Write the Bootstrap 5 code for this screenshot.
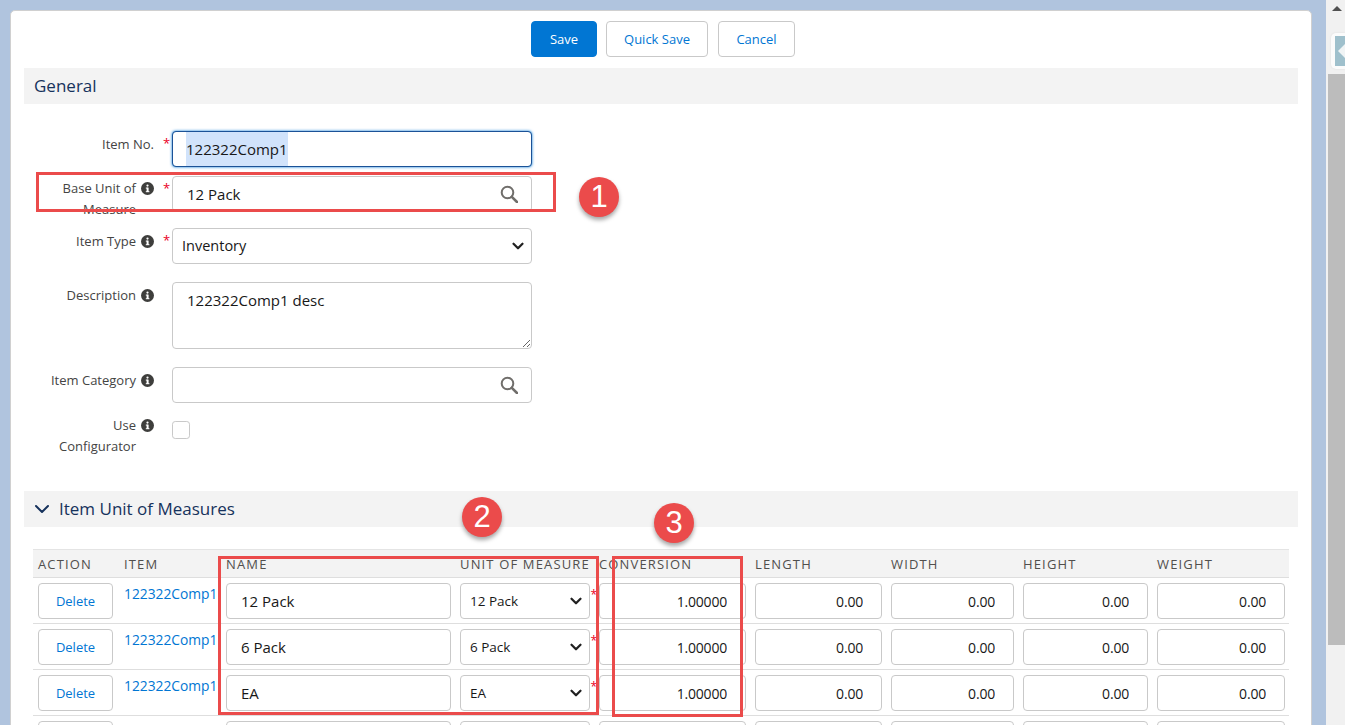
<!DOCTYPE html>
<html lang="en">
<head>
    <meta charset="UTF-8">
    <meta name="viewport" content="width=device-width, initial-scale=1.0">
    <title>Item</title>
    <link href="https://cdn.jsdelivr.net/npm/bootstrap@5.3.0/dist/css/bootstrap.min.css" rel="stylesheet">
    <style>
        html, body { height: 100%; overflow: hidden; }
        body { font-family: "Open Sans", "Liberation Sans", sans-serif; font-size: 13px; color: #181818; background: #b0c4de; }
        .page-wrap { height: 725px; overflow: hidden; position: relative; }
        .main-pane { width: 1326px; height: 725px; overflow: hidden; padding: 10px 14px 0 10px; }
        .fake-scroll { width: 19px; height: 725px; background: #f1f1f1; position: relative; }
        .scroll-up { width: 0; height: 0; border-left: 5px solid transparent; border-right: 5px solid transparent; border-bottom: 5px solid #505050; margin: 6px 0 0 6px; }
        .scroll-thumb { height: 571px; background: #bcbcbc; margin: 63px 0 0 2px; }
        .side-tab { position: absolute; left: 5px; top: 33px; width: 14px; height: 36px; background: #fbfbfb; border-radius: 5px 0 0 5px; padding: 3px 0 3px 4px; box-shadow: 0 0 2px #dcdcdc; }
        .side-tab-in { height: 100%; background: #9fc0cc; display: flex; align-items: center; }
        .side-tab-arrow { width: 0; height: 0; border-top: 8px solid transparent; border-bottom: 8px solid transparent; border-right: 8px solid #f0f4f5; margin-left: 3px; }
        .panel { background: #fff; border: 1px solid #d0d0d0; border-radius: 5px; height: 760px; padding: 10px 13px 0; }
        .btn-row { margin-bottom: 11px; padding-left: 4px; }
        .act-btn { height: 36px; font-size: 13px; padding: 1px 0 0; border-radius: 4px; }
        .act-save { width: 66px; background: #0176d3; border-color: #0176d3; color: #fff; }
        .act-plain { background: #fff; border-color: #c9c9c9; color: #0176d3; }
        .act-quick { width: 102px; margin-left: 9px; }
        .act-cancel { width: 77px; margin-left: 10px; }
        .sec-head { height: 36px; background: #f3f3f3; padding-left: 10px; font-size: 17px; color: #16325c; }
        .fld-wrap { margin-top: 27px; }
        .fld-label { width: 130px; padding-top: 3px; color: #444; line-height: 21px; }
        .fld-label svg { margin-top: 4px; margin-left: 5px; flex-shrink: 0; }
        .fld-star { width: 18px; padding: 3px 0 0 9px; color: #ea001e; font-size: 13px; }
        .fld-box { width: 360px; }
        .h-45 { height: 45px; } .h-52 { height: 52px; } .h-54 { height: 54px; } .h-85 { height: 85px; }
        .label-up { padding-top: 2px; }
        .inp { height: 36px; font-size: 15px; color: #181818; border: 1px solid #c9c9c9; border-radius: 4px; padding: 0 14px; box-shadow: none; }
        .inp-focus { display: flex; align-items: center; padding: 0 13px; border-color: #1b5297; box-shadow: 0 0 3px #0176d3; }
        .inp-focus span { background: #d1e3fb; height: 34px; line-height: 34px; }
        .inp-sel { padding: 0 9px; font-size: 14.5px; background-position: right 6px center; background-size: 14px 12px;
            background-image: url("data:image/svg+xml,%3csvg xmlns='http://www.w3.org/2000/svg' viewBox='0 0 16 16'%3e%3cpath fill='none' stroke='%23222' stroke-linecap='round' stroke-linejoin='round' stroke-width='3' d='m2 5 6 6 6-6'/%3e%3c/svg%3e"); }
        .inp-area { height: 67px; padding-top: 6px; }
        .search-ico { position: absolute; right: 14px; top: 9px; }
        .chk-box { width: 18px; height: 18px; margin: 9px 0 0; border: 1px solid #c9c9c9; border-radius: 3px; }
        .sec-two { margin-top: 34px; }
        .sec-two svg { margin-right: 9px; }
        .uom-wrap { margin: 22px 9px 0; }
        .uom-grid { table-layout: fixed; width: 1256px; margin: 0; border-top: 1px solid #e4e4e4; }
        .uom-grid th { height: 28px; padding: 3px 0 0 5px; background: #f3f3f3; font-weight: 400; font-size: 13px; letter-spacing: 1.15px; color: #514f4d; text-transform: uppercase; white-space: nowrap; vertical-align: middle; border-bottom: 1px solid #dedede; }
        .uom-grid td { padding: 5px 4px 4px 5px; vertical-align: top; border-bottom: 1px solid #dedede; }
        .uom-grid .inp-sel { font-size: 13.5px; }
        .w-act { width: 86px; } .w-item { width: 102px; } .w-name { width: 234px; } .w-unit { width: 139px; } .w-conv { width: 156px; }
        .w-len { width: 136px; } .w-wid { width: 132px; } .w-hei { width: 134px; } .w-wei { width: 137px; }
        .del-btn { width: 75px; height: 36px; padding: 2px 0 0; font-size: 13px; background: #fff; border-color: #c9c9c9; color: #0176d3; border-radius: 4px; }
        .item-link { display: block; margin-top: 1px; color: #0176d3; text-decoration: none; font-size: 13.8px; white-space: nowrap; }
        .unit-cell { position: relative; }
        .unit-star { position: absolute; right: -3px; top: 8px; color: #ea001e; font-size: 12px; }
        .num-inp { text-align: right; padding-right: 18px; font-size: 14px; letter-spacing: -.2px; }
        .mark-box { position: absolute; border: 3px solid #eb4b4b; }
        .mark-a { left: 36px; top: 172px; width: 520px; height: 40px; }
        .mark-b { left: 218px; top: 556px; width: 381px; height: 159px; }
        .mark-c { left: 612px; top: 556px; width: 131px; height: 161px; }
        .mark-num { position: absolute; width: 40px; height: 40px; border-radius: 50%; background: #eb4b4b; color: #fff; box-shadow: 0 3px 4px rgba(0,0,0,.35);
            font-family: "Liberation Sans", sans-serif; font-size: 31px; line-height: 39px; text-align: center; }
        .num-a { left: 579px; top: 177px; }
        .num-b { left: 462px; top: 497px; }
        .num-c { left: 654px; top: 503px; }
    </style>
</head>
<body>
    <div class="page-wrap d-flex">
        <div class="main-pane">
            <div class="panel">
                <div class="btn-row d-flex justify-content-center">
                    <button class="btn act-btn act-save">Save</button>
                    <button class="btn act-btn act-plain act-quick">Quick Save</button>
                    <button class="btn act-btn act-plain act-cancel">Cancel</button>
                </div>

                <div class="sec-head d-flex align-items-center">General</div>

                <div class="fld-wrap">
                    <div class="d-flex h-45">
                        <div class="fld-label text-end">Item No.</div>
                        <div class="fld-star">*</div>
                        <div class="fld-box"><div class="form-control inp inp-focus"><span>122322Comp1</span></div></div>
                    </div>
                    <div class="d-flex h-52">
                        <div class="fld-label label-up d-flex justify-content-end">
                            <div class="text-end">Base Unit of<br>Measure</div>
                            <svg width="13" height="13" viewBox="0 0 13 13"><circle cx="6.5" cy="6.5" r="6.5" fill="#3e3e3c"/><rect x="5.6" y="5.6" width="2" height="4.4" fill="#fff"/><rect x="4.8" y="9.2" width="3.6" height="1" fill="#fff"/><rect x="4.8" y="5.6" width="2" height="1" fill="#fff"/><circle cx="6.5" cy="3.6" r="1.1" fill="#fff"/></svg>
                        </div>
                        <div class="fld-star">*</div>
                        <div class="fld-box position-relative">
                            <input type="text" class="form-control inp" value="12 Pack">
                            <svg class="search-ico" width="18" height="18" viewBox="0 0 18 18"><circle cx="7.5" cy="7.5" r="5.8" fill="none" stroke="#706e6b" stroke-width="2"/><path d="M11.8 11.8 17 17" stroke="#706e6b" stroke-width="2.6" stroke-linecap="round"/></svg>
                        </div>
                    </div>
                    <div class="d-flex h-54">
                        <div class="fld-label d-flex justify-content-end">
                            <div class="text-end">Item Type</div>
                            <svg width="13" height="13" viewBox="0 0 13 13"><circle cx="6.5" cy="6.5" r="6.5" fill="#3e3e3c"/><rect x="5.6" y="5.6" width="2" height="4.4" fill="#fff"/><rect x="4.8" y="9.2" width="3.6" height="1" fill="#fff"/><rect x="4.8" y="5.6" width="2" height="1" fill="#fff"/><circle cx="6.5" cy="3.6" r="1.1" fill="#fff"/></svg>
                        </div>
                        <div class="fld-star">*</div>
                        <div class="fld-box">
                            <select class="form-select inp inp-sel"><option>Inventory</option></select>
                        </div>
                    </div>
                    <div class="d-flex h-85">
                        <div class="fld-label d-flex justify-content-end">
                            <div class="text-end">Description</div>
                            <svg width="13" height="13" viewBox="0 0 13 13"><circle cx="6.5" cy="6.5" r="6.5" fill="#3e3e3c"/><rect x="5.6" y="5.6" width="2" height="4.4" fill="#fff"/><rect x="4.8" y="9.2" width="3.6" height="1" fill="#fff"/><rect x="4.8" y="5.6" width="2" height="1" fill="#fff"/><circle cx="6.5" cy="3.6" r="1.1" fill="#fff"/></svg>
                        </div>
                        <div class="fld-star"></div>
                        <div class="fld-box">
                            <textarea class="form-control inp inp-area">122322Comp1 desc</textarea>
                        </div>
                    </div>
                    <div class="d-flex h-45">
                        <div class="fld-label d-flex justify-content-end">
                            <div class="text-end">Item Category</div>
                            <svg width="13" height="13" viewBox="0 0 13 13"><circle cx="6.5" cy="6.5" r="6.5" fill="#3e3e3c"/><rect x="5.6" y="5.6" width="2" height="4.4" fill="#fff"/><rect x="4.8" y="9.2" width="3.6" height="1" fill="#fff"/><rect x="4.8" y="5.6" width="2" height="1" fill="#fff"/><circle cx="6.5" cy="3.6" r="1.1" fill="#fff"/></svg>
                        </div>
                        <div class="fld-star"></div>
                        <div class="fld-box position-relative">
                            <input type="text" class="form-control inp">
                            <svg class="search-ico" width="18" height="18" viewBox="0 0 18 18"><circle cx="7.5" cy="7.5" r="5.8" fill="none" stroke="#706e6b" stroke-width="2"/><path d="M11.8 11.8 17 17" stroke="#706e6b" stroke-width="2.6" stroke-linecap="round"/></svg>
                        </div>
                    </div>
                    <div class="d-flex h-45">
                        <div class="fld-label d-flex justify-content-end">
                            <div class="text-end">Use<br>Configurator</div>
                            <svg width="13" height="13" viewBox="0 0 13 13"><circle cx="6.5" cy="6.5" r="6.5" fill="#3e3e3c"/><rect x="5.6" y="5.6" width="2" height="4.4" fill="#fff"/><rect x="4.8" y="9.2" width="3.6" height="1" fill="#fff"/><rect x="4.8" y="5.6" width="2" height="1" fill="#fff"/><circle cx="6.5" cy="3.6" r="1.1" fill="#fff"/></svg>
                        </div>
                        <div class="fld-star"></div>
                        <div class="fld-box"><input type="checkbox" class="form-check-input chk-box"></div>
                    </div>
                </div>

                <div class="sec-head sec-two d-flex align-items-center">
                    <svg width="16" height="10" viewBox="0 0 16 10"><path d="M2 2l6 6 6-6" fill="none" stroke="#16325c" stroke-width="2" stroke-linecap="round" stroke-linejoin="round"/></svg>
                    Item Unit of Measures
                </div>

                <div class="uom-wrap">
                    <table class="uom-grid">
                        <thead>
                            <tr>
                                <th class="w-act">Action</th><th class="w-item">Item</th><th class="w-name">Name</th><th class="w-unit">Unit of Measure</th><th class="w-conv">Conversion</th><th class="w-len">Length</th><th class="w-wid">Width</th><th class="w-hei">Height</th><th class="w-wei">Weight</th>
                            </tr>
                        </thead>
                        <tbody id="uomRows"></tbody>
                    </table>
                </div>
            </div>
        </div>

        <div class="fake-scroll">
            <div class="scroll-up"></div>
            <div class="scroll-thumb"></div>
            <div class="side-tab"><div class="side-tab-in"><div class="side-tab-arrow"></div></div></div>
        </div>

        <div class="mark-box mark-a"></div>
        <div class="mark-box mark-b"></div>
        <div class="mark-box mark-c"></div>
        <div class="mark-num num-a">1</div>
        <div class="mark-num num-b">2</div>
        <div class="mark-num num-c">3</div>
    </div>

    <script src="https://cdn.jsdelivr.net/npm/bootstrap@5.3.0/dist/js/bootstrap.bundle.min.js"></script>
    <script>
        let filas = ["12 Pack", "6 Pack", "EA"];
        let cuerpo = document.getElementById("uomRows");
        filas.forEach(nombre => {
            let fila = document.createElement("tr");
            fila.innerHTML = `
                <td><button class="btn del-btn">Delete</button></td>
                <td><a href="#" class="item-link">122322Comp1</a></td>
                <td><input type="text" class="form-control inp" value="${nombre}"></td>
                <td class="unit-cell"><select class="form-select inp inp-sel"><option>${nombre}</option></select><span class="unit-star">*</span></td>
                <td><input type="text" class="form-control inp num-inp" value="1.00000"></td>
                <td><input type="text" class="form-control inp num-inp" value="0.00"></td>
                <td><input type="text" class="form-control inp num-inp" value="0.00"></td>
                <td><input type="text" class="form-control inp num-inp" value="0.00"></td>
                <td><input type="text" class="form-control inp num-inp" value="0.00"></td>
            `;
            cuerpo.appendChild(fila);
        });

        // la cuarta fila queda cortada por el borde, solo se ven las cajas
        let ultima = document.createElement("tr");
        ultima.innerHTML = `
            <td><button class="btn del-btn"></button></td>
            <td></td>
            <td><input type="text" class="form-control inp"></td>
            <td><input type="text" class="form-control inp"></td>
            <td><input type="text" class="form-control inp"></td>
            <td><input type="text" class="form-control inp"></td>
            <td><input type="text" class="form-control inp"></td>
            <td><input type="text" class="form-control inp"></td>
            <td><input type="text" class="form-control inp"></td>
        `;
        cuerpo.appendChild(ultima);
    </script>
</body>
</html>
